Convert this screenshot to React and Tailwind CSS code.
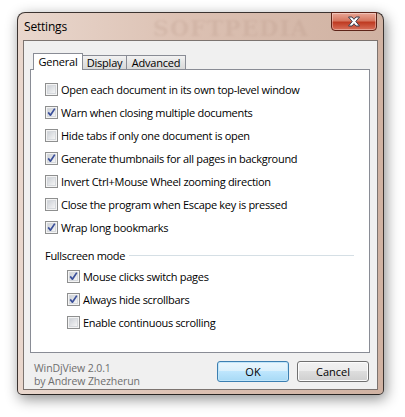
import React from 'react';

const font = "font-['Open_Sans','Liberation_Sans',sans-serif]";

const CheckBox = ({ checked }) => (
    <svg width="13" height="13" viewBox="0 0 13 13" className="shrink-0">
        <defs>
            <linearGradient id="cbFill" x1="0" y1="0" x2="1" y2="1">
                <stop offset="0" stopColor="#cbcfd5" />
                <stop offset="1" stopColor="#f7f7f7" />
            </linearGradient>
        </defs>
        <rect x="0.5" y="0.5" width="12" height="12" fill="#f4f4f4" stroke="#8e8f8f" />
        <rect x="2.5" y="2.5" width="8" height="8" fill="url(#cbFill)" stroke="#d6d9dd" />
        {checked && (
            <path d="M3.2 6.4 L5.4 9.2 L9.8 2.6" fill="none" stroke="#3a4f9a" strokeWidth="1.7" strokeLinejoin="round" />
        )}
    </svg>
);

const Option = ({ checked, label }) => (
    <div className="h-[23px] flex items-center gap-[3px]">
        <CheckBox checked={checked} />
        <span className="text-[11px] tracking-[-0.3px] text-black leading-none">{label}</span>
    </div>
);

const options = [
    { label: 'Open each document in its own top-level window', checked: false },
    { label: 'Warn when closing multiple documents', checked: true },
    { label: 'Hide tabs if only one document is open', checked: false },
    { label: 'Generate thumbnails for all pages in background', checked: true },
    { label: 'Invert Ctrl+Mouse Wheel zooming direction', checked: false },
    { label: 'Close the program when Escape key is pressed', checked: false },
    { label: 'Wrap long bookmarks', checked: true },
];

const fullscreen = [
    { label: 'Mouse clicks switch pages', checked: true },
    { label: 'Always hide scrollbars', checked: true },
    { label: 'Enable continuous scrolling', checked: false },
];

export default function App() {
    return (
        <div className={`w-[405px] h-[417px] bg-white pt-[12px] pl-[17px] ${font}`}>
            {/* Window frame */}
            <div className="relative w-[367px] h-[383px] flex flex-col rounded-t-[8px] rounded-b-[5px] border border-[#3b3330] border-b-[#2a2624] bg-[linear-gradient(to_right,#e9d7cd,#dcc1b3_45%,#d0b2a2)] shadow-[2px_4px_14px_rgba(0,0,0,0.45)]">
                {/* Title bar */}
                <div className="relative h-[27px] flex items-center pl-[6px]">
                    <span className="text-[12px] tracking-[-0.2px] text-black">Settings</span>
                    <span className="absolute left-[135px] top-[4px] text-[22px] leading-none font-bold tracking-[1px] text-[#b08e7e] opacity-20 blur-[1px] font-['DejaVu_Serif',serif]">SOFTPEDIA</span>
                </div>

                {/* Close button */}
                <div className="absolute top-[-1px] right-[6px] w-[46px] h-[19px] rounded-b-[4px] border border-[#5e2418] bg-[linear-gradient(to_bottom,#e9a796,#d67760_45%,#bf3b22_55%,#d8705a)] shadow-[inset_0_0_0_1px_rgba(255,255,255,0.35)] flex items-center justify-center">
                    <svg width="14" height="11" viewBox="0 0 14 11">
                        <path d="M1.5 1 H5 L7 3.3 L9 1 H12.5 L8.8 5.5 L12.5 10 H9 L7 7.7 L5 10 H1.5 L5.2 5.5 Z" fill="#ffffff" stroke="#3d3d4d" strokeWidth="1" strokeLinejoin="round" />
                    </svg>
                </div>

                {/* Client area */}
                <div className="mx-[5px] mb-[4px] flex-1 flex flex-col border border-[#7c7470] bg-[#f0f0f0]">
                    {/* Tabs */}
                    <div className="mt-[12px] ml-[9px] h-[16px] flex items-end">
                        <div className="relative z-10 w-[50px] h-[17px] -mb-px border border-b-0 border-[#898c95] bg-white flex items-start justify-center pt-[1px]">
                            <span className="text-[11px] tracking-[-0.2px] leading-[14px]">General</span>
                        </div>
                        <div className="w-[44px] h-[14px] border border-b-0 border-l-0 border-[#898c95] bg-[linear-gradient(to_bottom,#f2f2f2,#e4e4e4_50%,#d9d9d9)] flex items-center justify-center">
                            <span className="text-[11px] tracking-[-0.2px] leading-[14px] mt-[1px]">Display</span>
                        </div>
                        <div className="w-[59px] h-[14px] border border-b-0 border-l-0 border-[#898c95] bg-[linear-gradient(to_bottom,#f2f2f2,#e4e4e4_50%,#d9d9d9)] flex items-center justify-center">
                            <span className="text-[11px] tracking-[-0.2px] leading-[14px] mt-[1px]">Advanced</span>
                        </div>
                    </div>

                    {/* Tab panel */}
                    <div className="ml-[6px] w-[340px] h-[284px] border border-[#898c95] bg-white pt-[8px] pl-[14px] pr-[15px]">
                        {options.map((o) => (
                            <Option key={o.label} label={o.label} checked={o.checked} />
                        ))}
                        <div className="mt-[8px] h-[16px] flex items-center gap-[4px]">
                            <span className="text-[11px] tracking-[-0.3px] leading-none">Fullscreen mode</span>
                            <div className="flex-1 h-px bg-[#d5dfe5]" />
                        </div>
                        <div className="mt-[2px] pl-[22px]">
                            {fullscreen.map((o) => (
                                <Option key={o.label} label={o.label} checked={o.checked} />
                            ))}
                        </div>
                    </div>

                    {/* Footer */}
                    <div className="flex-1 flex items-start pl-[10px] pr-[8px] pt-[8px]">
                        <div className="flex flex-col text-[10.5px] tracking-[-0.1px] leading-[13px] text-[#6e6e6e] pt-[1px]">
                            <span>WinDjView 2.0.1</span>
                            <span>by Andrew Zhezherun</span>
                        </div>
                        <div className="ml-auto flex gap-[8px]">
                            <button className="w-[72px] h-[21px] rounded-[3px] border border-[#3c7fb1] bg-[linear-gradient(to_bottom,#eaf6fd,#d9f0fc_50%,#bee6fd_50%,#a7d9f5)] shadow-[inset_0_0_0_1px_#c1e6fa] text-[11px] text-black leading-none">
                                OK
                            </button>
                            <button className="w-[72px] h-[21px] rounded-[3px] border border-[#707070] bg-[linear-gradient(to_bottom,#f2f2f2,#ebebeb_50%,#dddddd_50%,#cfcfcf)] shadow-[inset_0_0_0_1px_#fcfcfc] text-[11px] text-black leading-none">
                                Cancel
                            </button>
                        </div>
                    </div>
                </div>
            </div>
        </div>
    );
}
